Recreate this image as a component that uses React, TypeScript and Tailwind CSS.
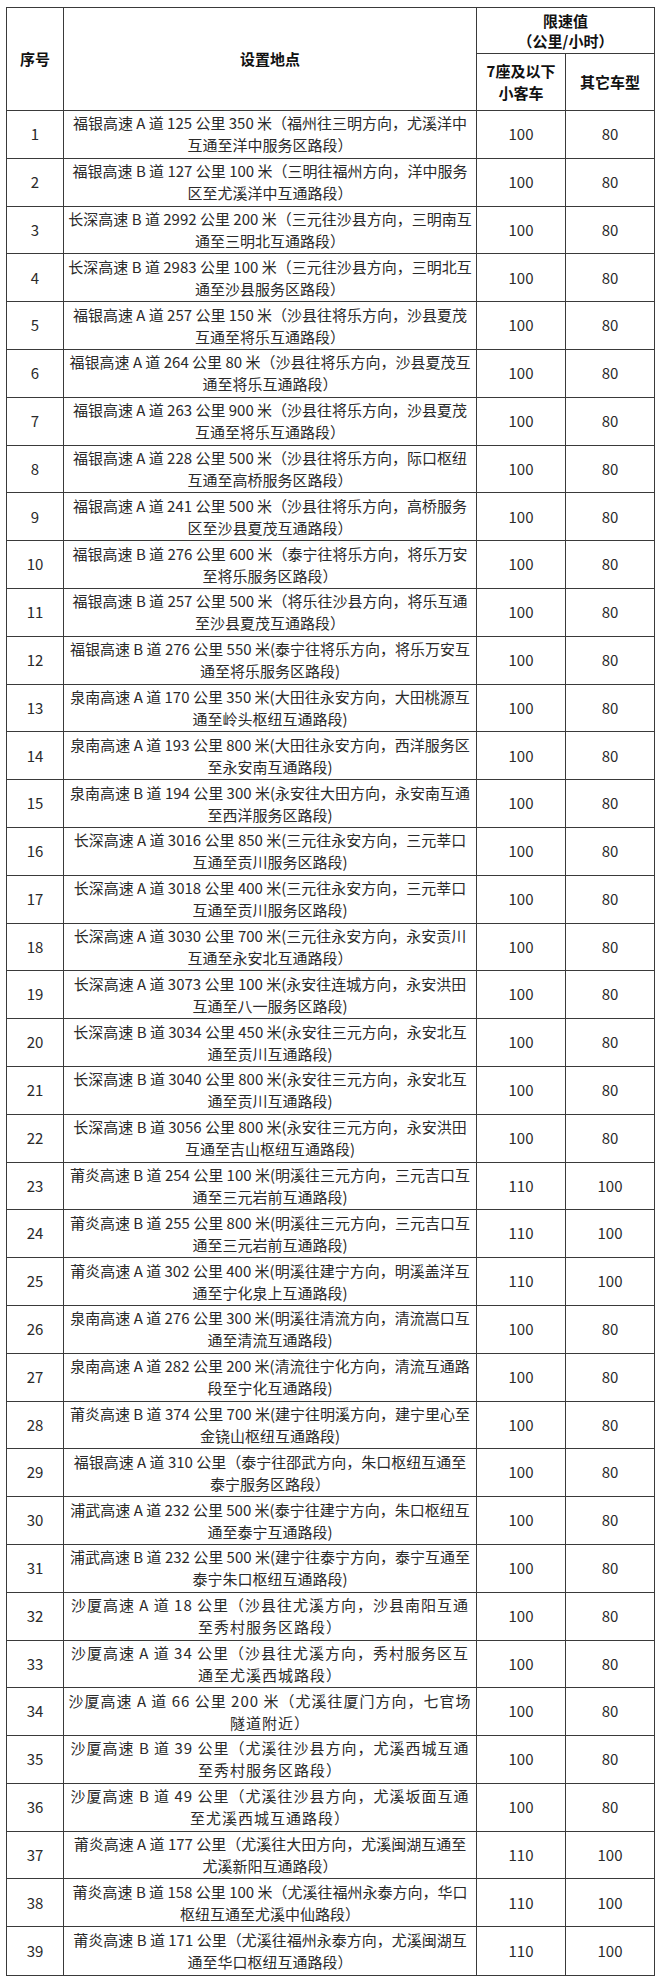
type Row = [string, string, number, number, boolean?];

const rows: Row[] = [
  ['福银高速 A 道 125 公里 350 米（福州往三明方向，尤溪洋中', '互通至洋中服务区路段）', 100, 80],
  ['福银高速 B 道 127 公里 100 米（三明往福州方向，洋中服务', '区至尤溪洋中互通路段）', 100, 80],
  ['长深高速 B 道 2992 公里 200 米（三元往沙县方向，三明南互', '通至三明北互通路段）', 100, 80],
  ['长深高速 B 道 2983 公里 100 米（三元往沙县方向，三明北互', '通至沙县服务区路段）', 100, 80],
  ['福银高速 A 道 257 公里 150 米（沙县往将乐方向，沙县夏茂', '互通至将乐互通路段）', 100, 80],
  ['福银高速 A 道 264 公里 80 米（沙县往将乐方向，沙县夏茂互', '通至将乐互通路段）', 100, 80],
  ['福银高速 A 道 263 公里 900 米（沙县往将乐方向，沙县夏茂', '互通至将乐互通路段）', 100, 80],
  ['福银高速 A 道 228 公里 500 米（沙县往将乐方向，际口枢纽', '互通至高桥服务区路段）', 100, 80],
  ['福银高速 A 道 241 公里 500 米（沙县往将乐方向，高桥服务', '区至沙县夏茂互通路段）', 100, 80],
  ['福银高速 B 道 276 公里 600 米（泰宁往将乐方向，将乐万安', '至将乐服务区路段）', 100, 80],
  ['福银高速 B 道 257 公里 500 米（将乐往沙县方向，将乐互通', '至沙县夏茂互通路段）', 100, 80],
  ['福银高速 B 道 276 公里 550 米(泰宁往将乐方向，将乐万安互', '通至将乐服务区路段)', 100, 80],
  ['泉南高速 A 道 170 公里 350 米(大田往永安方向，大田桃源互', '通至岭头枢纽互通路段)', 100, 80],
  ['泉南高速 A 道 193 公里 800 米(大田往永安方向，西洋服务区', '至永安南互通路段)', 100, 80],
  ['泉南高速 B 道 194 公里 300 米(永安往大田方向，永安南互通', '至西洋服务区路段)', 100, 80],
  ['长深高速 A 道 3016 公里 850 米(三元往永安方向，三元莘口', '互通至贡川服务区路段)', 100, 80],
  ['长深高速 A 道 3018 公里 400 米(三元往永安方向，三元莘口', '互通至贡川服务区路段)', 100, 80],
  ['长深高速 A 道 3030 公里 700 米(三元往永安方向，永安贡川', '互通至永安北互通路段）', 100, 80],
  ['长深高速 A 道 3073 公里 100 米(永安往连城方向，永安洪田', '互通至八一服务区路段)', 100, 80],
  ['长深高速 B 道 3034 公里 450 米(永安往三元方向，永安北互', '通至贡川互通路段)', 100, 80],
  ['长深高速 B 道 3040 公里 800 米(永安往三元方向，永安北互', '通至贡川互通路段)', 100, 80],
  ['长深高速 B 道 3056 公里 800 米(永安往三元方向，永安洪田', '互通至吉山枢纽互通路段)', 100, 80],
  ['莆炎高速 B 道 254 公里 100 米(明溪往三元方向，三元吉口互', '通至三元岩前互通路段)', 110, 100],
  ['莆炎高速 B 道 255 公里 800 米(明溪往三元方向，三元吉口互', '通至三元岩前互通路段)', 110, 100],
  ['莆炎高速 A 道 302 公里 400 米(明溪往建宁方向，明溪盖洋互', '通至宁化泉上互通路段)', 110, 100],
  ['泉南高速 A 道 276 公里 300 米(明溪往清流方向，清流嵩口互', '通至清流互通路段)', 100, 80],
  ['泉南高速 A 道 282 公里 200 米(清流往宁化方向，清流互通路', '段至宁化互通路段)', 100, 80],
  ['莆炎高速 B 道 374 公里 700 米(建宁往明溪方向，建宁里心至', '金铙山枢纽互通路段)', 100, 80],
  ['福银高速 A 道 310 公里（泰宁往邵武方向，朱口枢纽互通至', '泰宁服务区路段）', 100, 80],
  ['浦武高速 A 道 232 公里 500 米(泰宁往建宁方向，朱口枢纽互', '通至泰宁互通路段)', 100, 80],
  ['浦武高速 B 道 232 公里 500 米(建宁往泰宁方向，泰宁互通至', '泰宁朱口枢纽互通路段)', 100, 80],
  ['沙厦高速 A 道 18 公里（沙县往尤溪方向，沙县南阳互通', '至秀村服务区路段）', 100, 80, true],
  ['沙厦高速 A 道 34 公里（沙县往尤溪方向，秀村服务区互', '通至尤溪西城路段）', 100, 80, true],
  ['沙厦高速 A 道 66 公里 200 米（尤溪往厦门方向，七官场', '隧道附近）', 100, 80, true],
  ['沙厦高速 B 道 39 公里（尤溪往沙县方向，尤溪西城互通', '至秀村服务区路段）', 100, 80, true],
  ['沙厦高速 B 道 49 公里（尤溪往沙县方向，尤溪坂面互通', '至尤溪西城互通路段）', 100, 80, true],
  ['莆炎高速 A 道 177 公里（尤溪往大田方向，尤溪闽湖互通至', '尤溪新阳互通路段）', 110, 100],
  ['莆炎高速 B 道 158 公里 100 米（尤溪往福州永泰方向，华口', '枢纽互通至尤溪中仙路段）', 110, 100],
  ['莆炎高速 B 道 171 公里（尤溪往福州永泰方向，尤溪闽湖互', '通至华口枢纽互通路段）', 110, 100],
];

export default function App() {
  return (
    <div className="w-[660px] h-[1985px] bg-white pt-[7px] pl-[6px] font-['Noto_Sans_CJK_SC',sans-serif] text-[15px] text-[#2a2a2a]">
      <div className="w-[649px] border border-[#3a3a3a]">
        {/* Header */}
        <div className="flex h-[103px] border-b border-[#3a3a3a] font-bold text-[#111]">
          <div className="w-[57px] shrink-0 border-r border-[#3a3a3a] flex items-center justify-center">序号</div>
          <div className="w-[413px] shrink-0 border-r border-[#3a3a3a] flex items-center justify-center">设置地点</div>
          <div className="flex-1 flex flex-col">
            <div className="h-[46px] border-b border-[#3a3a3a] flex flex-col items-center justify-center leading-[20px]">
              <span>限速值</span>
              <span>（公里/小时）</span>
            </div>
            <div className="flex flex-1">
              <div className="w-[89px] shrink-0 border-r border-[#3a3a3a] flex flex-col items-center justify-center leading-[22px]">
                <span>7座及以下</span>
                <span>小客车</span>
              </div>
              <div className="flex-1 flex items-center justify-center">其它车型</div>
            </div>
          </div>
        </div>

        {/* Rows */}
        {rows.map(([a, b, v1, v2, wide], i) => (
          <div
            key={i}
            className={`flex h-[47.8px] ${i < rows.length - 1 ? 'border-b border-[#3a3a3a]' : ''}`}
          >
            <div className="w-[57px] shrink-0 border-r border-[#3a3a3a] flex items-center justify-center">{i + 1}</div>
            <div
              className={`w-[413px] shrink-0 border-r border-[#3a3a3a] flex flex-col items-center justify-center leading-[22px] whitespace-nowrap ${wide ? 'tracking-[1px]' : ''}`}
            >
              <span>{a}</span>
              <span>{b}</span>
            </div>
            <div className="w-[89px] shrink-0 border-r border-[#3a3a3a] flex items-center justify-center">{v1}</div>
            <div className="flex-1 flex items-center justify-center">{v2}</div>
          </div>
        ))}
      </div>
    </div>
  );
}
